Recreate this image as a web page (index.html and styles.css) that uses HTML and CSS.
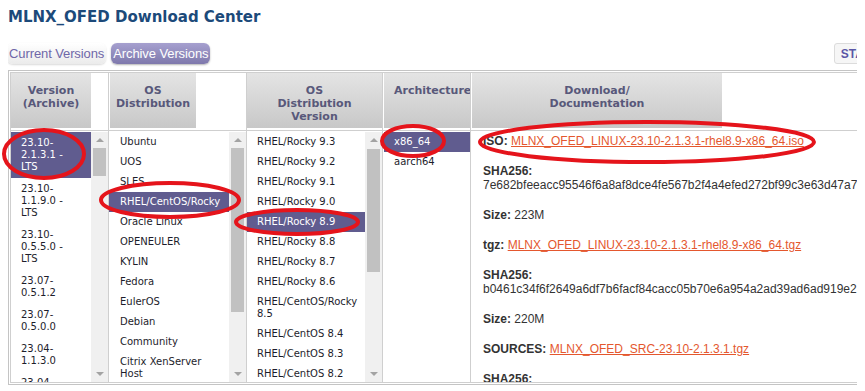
FILE: index.html
```html
<!DOCTYPE html>
<html lang="en">
  <head>
    <meta charset="UTF-8" />
    <meta name="viewport" content="width=device-width, initial-scale=1.0" />
    <title>MLNX_OFED Download Center</title>
    <link rel="stylesheet" href="styles.css">
  </head>

  <body>
    <h1 class="page-title">MLNX_OFED Download Center</h1>

    <div class="tab-row">
      <span class="tab tab-current">Current Versions</span>
      <span class="tab tab-active">Archive Versions</span>
      <span class="status-btn">STATUS</span>
    </div>

    <div class="outer-box">
      <div class="grid">
        <!-- header row -->
        <div class="head-cell c1"><div class="head head-ver">Version<br>(Archive)</div></div>
        <div class="head-cell"><div class="head head-os">OS<br>Distribution</div></div>
        <div class="head-cell"><div class="head">OS<br>Distribution<br>Version</div></div>
        <div class="head-cell"><div class="head head-arch">Architecture</div></div>
        <div class="head-cell"><div class="head head-dl">Download/<br>Documentation</div></div>

        <!-- version list -->
        <div class="body-cell c1">
          <div class="list">
            <div class="opts ver">
              <div class="opt sel">23.10-<br>2.1.3.1 -<br>LTS</div>
              <div class="opt">23.10-<br>1.1.9.0 -<br>LTS</div>
              <div class="opt">23.10-<br>0.5.5.0 -<br>LTS</div>
              <div class="opt">23.07-<br>0.5.1.2</div>
              <div class="opt">23.07-<br>0.5.0.0</div>
              <div class="opt">23.04-<br>1.1.3.0</div>
              <div class="opt">23.04-<br>0.5.3.3</div>
            </div>
            <div class="scrollbar">
              <div class="arrow-box"><span class="arrow-up"></span></div>
              <div class="thumb thumb-ver"></div>
              <div class="track-fill"></div>
              <div class="arrow-box"><span class="arrow-down"></span></div>
            </div>
          </div>
        </div>

        <!-- os list -->
        <div class="body-cell">
          <div class="list">
            <div class="opts os">
              <div class="opt">Ubuntu</div>
              <div class="opt">UOS</div>
              <div class="opt">SLES</div>
              <div class="opt sel">RHEL/CentOS/Rocky</div>
              <div class="opt">Oracle Linux</div>
              <div class="opt">OPENEULER</div>
              <div class="opt">KYLIN</div>
              <div class="opt">Fedora</div>
              <div class="opt">EulerOS</div>
              <div class="opt">Debian</div>
              <div class="opt">Community</div>
              <div class="opt">Citrix XenServer<br>Host</div>
            </div>
            <div class="scrollbar">
              <div class="arrow-box"><span class="arrow-up"></span></div>
              <div class="thumb thumb-os"></div>
              <div class="track-fill"></div>
              <div class="arrow-box"><span class="arrow-down"></span></div>
            </div>
          </div>
        </div>

        <!-- os version list -->
        <div class="body-cell">
          <div class="list">
            <div class="opts osver">
              <div class="opt">RHEL/Rocky 9.3</div>
              <div class="opt">RHEL/Rocky 9.2</div>
              <div class="opt">RHEL/Rocky 9.1</div>
              <div class="opt">RHEL/Rocky 9.0</div>
              <div class="opt sel">RHEL/Rocky 8.9</div>
              <div class="opt">RHEL/Rocky 8.8</div>
              <div class="opt">RHEL/Rocky 8.7</div>
              <div class="opt">RHEL/Rocky 8.6</div>
              <div class="opt">RHEL/CentOS/Rocky<br>8.5</div>
              <div class="opt">RHEL/CentOS 8.4</div>
              <div class="opt">RHEL/CentOS 8.3</div>
              <div class="opt">RHEL/CentOS 8.2</div>
            </div>
            <div class="scrollbar">
              <div class="arrow-box"><span class="arrow-up"></span></div>
              <div class="thumb thumb-osver"></div>
              <div class="track-fill"></div>
              <div class="arrow-box"><span class="arrow-down"></span></div>
            </div>
          </div>
        </div>

        <!-- architecture list -->
        <div class="body-cell">
          <div class="list">
            <div class="opts arch">
              <div class="opt sel">x86_64</div>
              <div class="opt">aarch64</div>
            </div>
          </div>
        </div>

        <!-- download info -->
        <div class="body-cell dl-cell">
          <div class="dl-body">
            <p><b>ISO:</b> <a href="#">MLNX_OFED_LINUX-23.10-2.1.3.1-rhel8.9-x86_64.iso</a></p>
            <p><b>SHA256:</b><br>7e682bfeeacc95546f6a8af8dce4fe567b2f4a4efed272bf99c3e63d47a7c1d0e94b</p>
            <p><b>Size:</b> 223M</p>
            <p><b>tgz:</b> <a href="#">MLNX_OFED_LINUX-23.10-2.1.3.1-rhel8.9-x86_64.tgz</a></p>
            <p><b>SHA256:</b><br>b0461c34f6f2649a6df7b6facf84cacc05b70e6a954a2ad39ad6ad919e21f3a8c27d</p>
            <p><b>Size:</b> 220M</p>
            <p><b>SOURCES:</b> <a href="#">MLNX_OFED_SRC-23.10-2.1.3.1.tgz</a></p>
            <p><b>SHA256:</b><br>5c1f0d9e7a3b2c84e61fa0d2b97c5e3a1f48d6b0c29e7a51f3d8b6c4a2e90f17</p>
          </div>
        </div>
      </div>
    </div>

    <!-- red annotation marks drawn over the page -->
    <svg class="marks" width="865" height="391" viewBox="0 0 865 391">
      <ellipse cx="44" cy="154" rx="40" ry="24" />
      <ellipse cx="170" cy="200" rx="69" ry="17" />
      <ellipse cx="297" cy="222" rx="61" ry="12" />
      <ellipse cx="413" cy="141" rx="31" ry="15" />
      <ellipse cx="647" cy="142" rx="167" ry="20" />
    </svg>
  </body>
</html>
```

FILE: styles.css
```css
/* General page settings */
html, body {
  overflow: hidden;
}

body {
  margin: 8px;
  background: #fff;
  font-family: "DejaVu Sans", Verdana, sans-serif;
  color: #1d1d2b;
}

.page-title {
  margin: 0;
  font-size: 15px;
  line-height: 18px;
  font-weight: bold;
  color: #1c4a7a;
}

/* Tabs */
.tab-row {
  display: flex;
  align-items: center;
  gap: 5px;
  width: 886px;
  margin-top: 17px;
}

.tab {
  height: 21px;
  line-height: 21px;
  padding: 0 2px;
  border-radius: 6px;
  font-family: "Liberation Sans", Arial, sans-serif;
  font-size: 13px;
  letter-spacing: -0.1px;
  white-space: nowrap;
}

.tab-current {
  margin-left: -1px;
  color: #6f67a8;
  background: linear-gradient(#ffffff, #ebebeb);
  box-shadow: 0 1px 2px rgba(0, 0, 0, 0.15);
}

.tab-active {
  color: #fff;
  background: linear-gradient(#a6a0cf, #7e78ac);
  box-shadow: 0 1px 2px rgba(0, 0, 0, 0.3);
}

.status-btn {
  margin-left: auto;
  height: 21px;
  line-height: 21px;
  padding: 0 6px;
  border: 1px solid #dcdcdc;
  border-radius: 3px;
  background: #f6f6f6;
  box-sizing: border-box;
  font-family: "Liberation Sans", Arial, sans-serif;
  font-size: 12px;
  font-weight: bold;
  color: #5b57a6;
}

/* Selection table */
.outer-box {
  width: 848px;
  margin-top: 6px;
  padding: 1px;
  border: 1px solid #c4c4c4;
}

.grid {
  display: grid;
  grid-template-columns: 97px 138px 136px 88px 387px;
  border: 1px solid #cfcfcf;
}

.head-cell, .body-cell {
  box-sizing: border-box;
  border-left: 1px solid #cfcfcf;
}

.c1 {
  border-left: none;
}

.head-cell {
  height: 58px;
  border-bottom: 1px solid #cfcfcf;
}

.head {
  height: 55px;
  box-sizing: border-box;
  padding-top: 11px;
  background: linear-gradient(#e4e4e4, #c8c8c8);
  font-size: 11px;
  line-height: 13px;
  font-weight: bold;
  color: #58587a;
  text-align: center;
}

.head-ver {
  width: 80px;
}

.head-os {
  width: 86px;
  margin-left: 1px;
}

.head-arch {
  margin-left: 1px;
  padding-left: 10px;
  text-align: left;
  white-space: nowrap;
  overflow: hidden;
}

.head-dl {
  width: 250px;
  margin-left: 1px;
}

.body-cell {
  height: 251px;
  padding-top: 1px;
}

/* List boxes */
.list {
  display: flex;
  height: 250px;
}

.opts {
  flex: 1;
  overflow: hidden;
  font-size: 10px;
  line-height: 12px;
}

.opt {
  padding: 4px 10px;
  white-space: nowrap;
}

.ver .opt {
  padding: 5px 10px;
}

.os .opt {
  padding-left: 11px;
}

.arch {
  margin-left: 1px;
}

.opt.sel {
  background-color: #605c8f;
  color: #fff;
}

.scrollbar {
  width: 17px;
  display: flex;
  flex-direction: column;
  align-items: center;
  background: #f0f0f0;
}

.arrow-box {
  height: 16px;
  width: 17px;
  display: flex;
  justify-content: center;
  align-items: center;
}

.arrow-up, .arrow-down {
  width: 0;
  height: 0;
  border-left: 4px solid transparent;
  border-right: 4px solid transparent;
}

.arrow-up {
  border-bottom: 4px solid #a3a3a3;
}

.arrow-down {
  border-top: 4px solid #a3a3a3;
}

.thumb {
  width: 13px;
  background: #c1c1c1;
}

.thumb-ver { height: 28px; }
.thumb-os { height: 164px; }
.thumb-osver { height: 123px; margin-top: 1px; }

.track-fill {
  flex: 1;
}

/* Download details */
.dl-cell {
  overflow: hidden;
  font-family: "Liberation Sans", Arial, sans-serif;
  font-size: 12px;
  color: #333;
}

.dl-body {
  padding: 2px 0 0 12px;
  white-space: nowrap;
}

.dl-body p {
  margin: 0 0 16px;
  line-height: 14px;
}

.dl-body a {
  color: #e4572e;
}

/* Red annotation marks */
.marks {
  position: absolute;
  top: 0;
  left: 0;
  pointer-events: none;
}

.marks ellipse {
  fill: none;
  stroke: #e5141b;
  stroke-width: 4;
}
```
